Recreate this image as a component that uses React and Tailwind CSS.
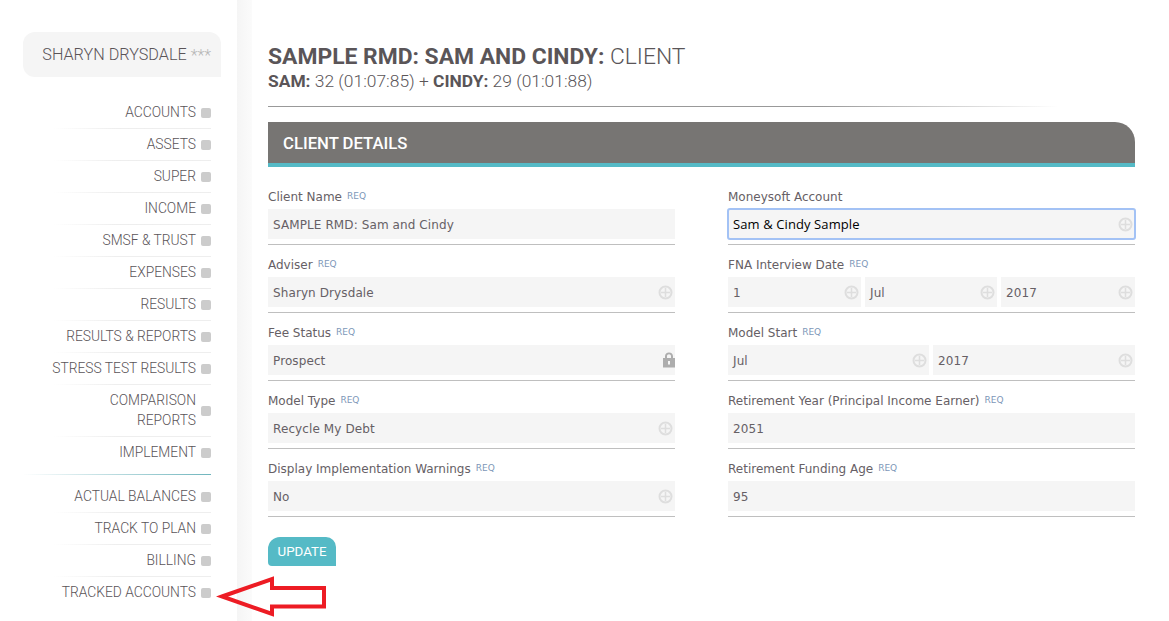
import React from 'react';

const navTop = ['ACCOUNTS', 'ASSETS', 'SUPER', 'INCOME', 'SMSF & TRUST', 'EXPENSES', 'RESULTS', 'RESULTS & REPORTS', 'STRESS TEST RESULTS'];
const navBottom = ['ACTUAL BALANCES', 'TRACK TO PLAN', 'BILLING', 'TRACKED ACCOUNTS'];

function PlusIcon() {
    return (
        <svg width="15" height="15" viewBox="0 0 15 15" className="shrink-0" fill="none" stroke="#dedede" strokeWidth="2">
            <circle cx="7.5" cy="7.5" r="6" />
            <path d="M7.5 3v9M3 7.5h9" strokeWidth="1.500" />
        </svg>
    );
}

function LockIcon() {
    return (
        <svg width="12" height="16" viewBox="0 0 12 16" className="shrink-0 -mr-[2px]" fill="#adadad">
            <path fillRule="evenodd" d="M2 6V4.2C2 2 3.7.5 6 .5s4 1.500 4 3.700V6h2v9.500H0V6h2zm2 0h4V4.200C8 3 7.100 2.300 6 2.300S4 3 4 4.200V6zm1 3v3.500h2V9H5z" />
        </svg>
    );
}

function NavItem({ label, last }) {
    return (
        <div className="relative flex items-center justify-end gap-[5px] min-h-[32px] pt-[5.5px] pb-[6.5px] text-right">
            <span className="text-[13.8px] leading-[20px] text-[#5a5458] font-['Roboto',sans-serif] font-light">{label}</span>
            <span className="w-[10px] h-[10px] rounded-[2px] bg-[#cccccc] shrink-0 mt-[3px]"></span>
            {!last && <div className="absolute -bottom-[1px] left-[30px] right-0 h-[1px] bg-gradient-to-r from-transparent to-[#eeeeee] to-[40%]"></div>}
        </div>
    );
}

function Label({ text, req }) {
    return (
        <div className="h-[14px] flex items-center gap-[5px] text-[12px] text-[#666065] font-['DejaVu_Sans',sans-serif] whitespace-nowrap">
            {text}
            {req && <span className="text-[9px] text-[#7d97b8]">REQ</span>}
        </div>
    );
}

function Box({ value, icon, focus, className }) {
    return (
        <div className={`${className || 'w-full'} h-[30px] bg-[#f5f5f5] flex items-center justify-between pl-[5px] pr-[2px] text-[12px] tracking-[0.1px] font-['DejaVu_Sans',sans-serif] ${focus ? 'outline-2 -outline-offset-1 outline-[#a3c2f5] rounded-[2px] text-black' : 'text-[#666065]'}`}>
            <span className={`pt-[2px] ${focus ? "font-['Open_Sans',sans-serif] text-[13px]" : ''}`}>{value}</span>
            {icon === 'plus' && <PlusIcon />}
            {icon === 'lock' && <LockIcon />}
        </div>
    );
}

function Field({ text, req, children }) {
    return (
        <div className="h-[68px] pt-[22px]">
            <Label text={text} req={req} />
            <div className="flex gap-[4px] mt-[5px]">{children}</div>
            <div className="mt-[5px] h-[1px] bg-[#bfbfbf]"></div>
        </div>
    );
}

export default function App() {
    return (
        <div className="relative flex w-[1169px] h-[621px] overflow-hidden bg-white">
            <aside className="w-[237px] shrink-0 pl-[23px] pt-[32px]">
                <div className="w-[198px] h-[45px] bg-[#f5f5f5] rounded-t-[12px] rounded-bl-[12px] flex items-center justify-end pr-[10px] pt-[2px] gap-[4px] font-['Roboto',sans-serif] font-light text-[16.2px] text-[#5a5458]">
                    SHARYN DRYSDALE <span className="text-[#b5b5b5] text-[16px]">***</span>
                </div>
                <nav className="w-[188px] mt-[19px]">
                    {navTop.map(label => <NavItem key={label} label={label} />)}
                    <NavItem label={<>COMPARISON<br />REPORTS</>} />
                    <NavItem label="IMPLEMENT" last />
                    <div className="h-[1px] mt-[6px] mb-[5px] bg-gradient-to-r from-transparent to-[#6fb5bd]"></div>
                    {navBottom.map((label, i) => <NavItem key={label} label={label} last={i === navBottom.length - 1} />)}
                </nav>
            </aside>
            <div className="w-[15px] shrink-0 bg-gradient-to-r from-[#f5f5f5] to-[#fbfbfb]"></div>
            <main className="w-[867px] ml-[16px] pt-[43px] text-[#5a5558] font-['Roboto',sans-serif]">
                <h1 className="text-[22.85px] leading-[27px] font-light whitespace-nowrap"><b className="font-bold">SAMPLE RMD: SAM AND CINDY:</b> CLIENT</h1>
                <p className="text-[17.4px] leading-[22px] font-light whitespace-nowrap"><b className="font-bold">SAM:</b> 32 (01:07:85) + <b className="font-bold">CINDY:</b> 29 (01:01:88)</p>
                <div className="h-[1px] mt-[14px] w-[790px] bg-gradient-to-r from-[#999999] from-[70%] to-transparent"></div>
                <div className="mt-[15px] h-[45px] bg-[#777573] border-b-4 border-[#55bac6] rounded-tr-[20px] flex items-center pl-[15px] pt-[3px] text-[16.7px] font-medium text-white">CLIENT DETAILS</div>
                <div className="grid grid-cols-[407px_407px] gap-x-[53px] mt-[1px]">
                    <div>
                        <Field text="Client Name" req><Box value="SAMPLE RMD: Sam and Cindy" /></Field>
                        <Field text="Adviser" req><Box value="Sharyn Drysdale" icon="plus" /></Field>
                        <Field text="Fee Status" req><Box value="Prospect" icon="lock" /></Field>
                        <Field text="Model Type" req><Box value="Recycle My Debt" icon="plus" /></Field>
                        <Field text="Display Implementation Warnings" req><Box value="No" icon="plus" /></Field>
                    </div>
                    <div>
                        <Field text="Moneysoft Account"><Box value="Sam & Cindy Sample" icon="plus" focus /></Field>
                        <Field text="FNA Interview Date" req>
                            <Box value="1" icon="plus" className="w-[133px]" />
                            <Box value="Jul" icon="plus" className="w-[132px]" />
                            <Box value="2017" icon="plus" className="w-[134px]" />
                        </Field>
                        <Field text="Model Start" req>
                            <Box value="Jul" icon="plus" className="w-[201px]" />
                            <Box value="2017" icon="plus" className="w-[202px]" />
                        </Field>
                        <Field text="Retirement Year (Principal Income Earner)" req><Box value="2051" /></Field>
                        <Field text="Retirement Funding Age" req><Box value="95" /></Field>
                    </div>
                </div>
                <button className="mt-[29px] w-[68px] h-[29px] bg-[#55bac6] text-white text-[13.3px] rounded-tl-[12px] rounded-tr-[10px] rounded-bl-[4px] flex items-center justify-center">UPDATE</button>
            </main>
            <svg className="absolute left-[216px] top-[575px]" width="114" height="44" viewBox="0 0 114 44" fill="none" stroke="#ed1c24" strokeWidth="4">
                <path d="M6 21.500L56 4v9h52v18.500H56V39z" />
            </svg>
        </div>
    );
}
